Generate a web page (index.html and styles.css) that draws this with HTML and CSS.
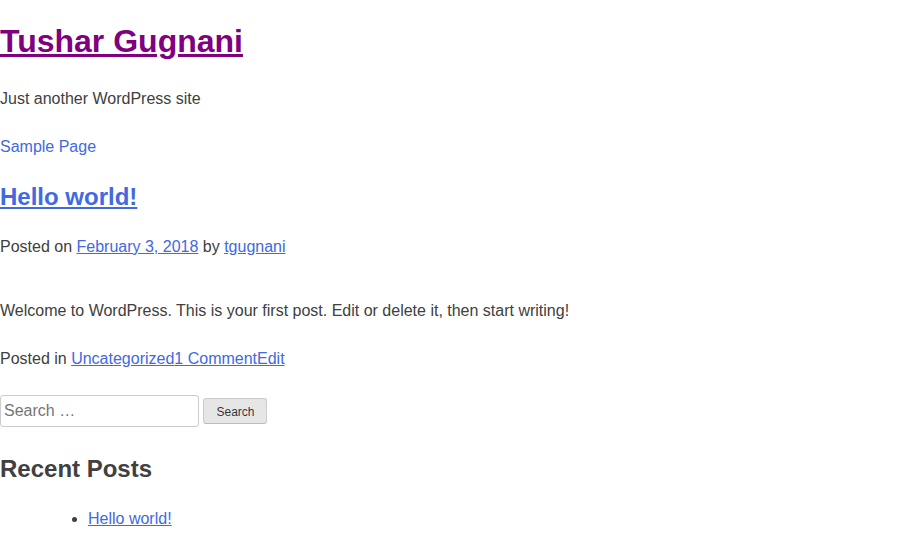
FILE: index.html
```html
<!DOCTYPE html>
<html lang="en">
<head>
  <meta charset="UTF-8">
  <meta name="viewport" content="width=device-width, initial-scale=1.0">
  <title>Tushar Gugnani – Just another WordPress site</title>
  <link rel="stylesheet" href="styles.css">
</head>
<body>
  <div id="page" class="site">
    <header class="site-header">
      <div class="site-branding">
        <h1 class="site-title"><a href="#" class="visited">Tushar Gugnani</a></h1>
        <p class="site-description">Just another WordPress site</p>
      </div>

      <nav class="main-navigation">
        <ul class="menu">
          <li><a href="#">Sample Page</a></li>
        </ul>
      </nav>
    </header>

    <div class="site-content">
      <main class="site-main">
        <article class="post">
          <header class="entry-header">
            <h2 class="entry-title"><a href="#">Hello world!</a></h2>
            <div class="entry-meta">
              Posted on <a href="#">February 3, 2018</a> by <a href="#">tgugnani</a>
            </div>
          </header>

          <div class="entry-content">
            <p>Welcome to WordPress. This is your first post. Edit or delete it, then start writing!</p>
          </div>

          <footer class="entry-footer">
            Posted in <a href="#">Uncategorized</a><a href="#">1 Comment</a><a href="#">Edit</a>
          </footer>
        </article>
      </main>

      <aside class="widget-area">
        <section class="widget widget-search">
          <form class="search-form">
            <label><input type="search" class="search-field" placeholder="Search …"></label>
            <input type="submit" class="search-submit" value="Search">
          </form>
        </section>

        <section class="widget">
          <h2 class="widget-title">Recent Posts</h2>
          <ul>
            <li><a href="#">Hello world!</a></li>
          </ul>
        </section>
      </aside>
    </div>
  </div>
</body>
</html>
```

FILE: styles.css
```css
body {
  margin: 0;
  color: #404040;
  font-family: "Liberation Sans", Arial, sans-serif;
  font-size: 16px;
  line-height: 1.5;
}
a {
  color: royalblue;
}
a.visited {
  color: purple;
}
h1, h2 {
  font-weight: bold;
}
.site-title {
  font-size: 2em;
  margin: 17px 0 22px;
}
p {
  margin: 0 0 1.5em;
}
.main-navigation ul {
  list-style: none;
  margin: 0;
  padding-left: 0;
}
.main-navigation a {
  text-decoration: none;
}
.entry-title,
.widget-title {
  font-size: 1.5em;
  margin: 0.83em 0;
}
.entry-content {
  display: flow-root;
  margin-top: 1.5em;
}
.entry-content p {
  margin-top: 1em;
}
.post {
  margin-bottom: 1.5em;
}
.widget {
  margin: 0 0 1.5em;
}
.widget ul {
  margin: 0 0 1.5em 3em;
  padding-left: 40px;
  list-style: disc;
}
.search-form {
  line-height: 1;
}
.search-field {
  width: 199px;
  box-sizing: border-box;
  padding: 3px;
  font-family: inherit;
  font-size: 16px;
  line-height: 1.5;
  color: #666;
  border: 1px solid #ccc;
  border-radius: 3px;
}
.search-submit {
  font-family: inherit;
  font-size: 12px;
  line-height: 1;
  padding: 0.6em 1em 0.4em;
  color: rgba(0, 0, 0, 0.8);
  background: #e6e6e6;
  border: 1px solid;
  border-color: #ccc #ccc #bbb;
  border-radius: 3px;
}
```
